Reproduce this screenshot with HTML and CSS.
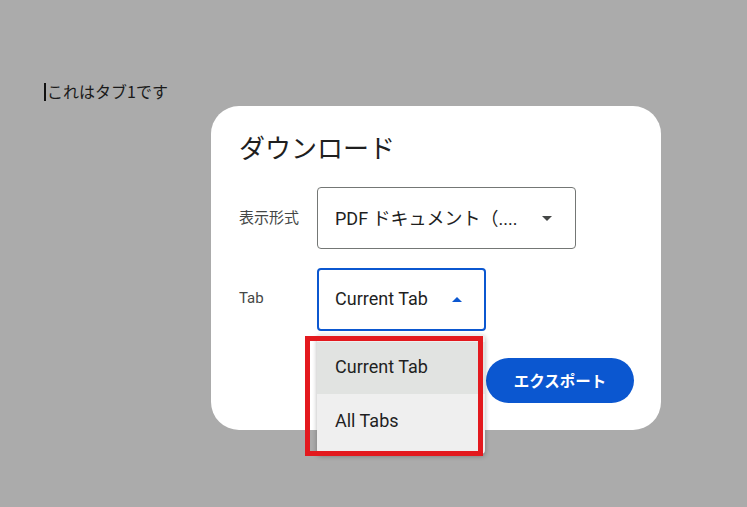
FILE: index.html
```html
<!DOCTYPE html>
<html lang="ja">
<head>
    <meta charset="UTF-8">
    <meta name="viewport" content="width=device-width, initial-scale=1.0">
    <title>ダウンロード</title>
    <link rel="stylesheet" href="styles.css">
</head>
<body>
    <div class="page">
        <p class="tab-text"><span class="caret"></span>これはタブ1です</p>
    </div>

    <div class="dialog">
        <h2 class="dialog-title">ダウンロード</h2>

        <div class="field-row">
            <span class="field-label">表示形式</span>
            <div class="select select-format">
                <span class="select-value">PDF ドキュメント（....</span>
                <span class="arrow-down"></span>
            </div>
        </div>

        <div class="field-row field-row-tab">
            <span class="field-label">Tab</span>
            <div class="select-wrap">
                <div class="select select-tab">
                    <span class="select-value">Current Tab</span>
                    <span class="arrow-up"></span>
                </div>
                <ul class="menu">
                    <li class="menu-item selected">Current Tab</li>
                    <li class="menu-item">All Tabs</li>
                </ul>
                <div class="highlight"></div>
            </div>
        </div>

        <div class="actions">
            <button class="btn-export">エクスポート</button>
        </div>
    </div>
</body>
</html>
```

FILE: styles.css
```css
html, body {
    margin: 0;
    height: 100%;
}

body {
    background: #ababab;
    font-family: "Roboto", "Noto Sans CJK JP", sans-serif;
    color: #1f1f1f;
}

.page {
    padding: 80px 0 0 44px;
}

.tab-text {
    margin: 0;
    display: flex;
    align-items: center;
    font-family: "Noto Sans CJK JP", sans-serif;
    font-size: 16px;
    line-height: 22px;
    color: #1a1a1a;
}

.caret {
    display: inline-block;
    width: 2px;
    height: 18px;
    background: #111;
    margin: 2px 1px 0 0;
}

/* modal window */
.dialog {
    position: absolute;
    left: 211px;
    top: 106px;
    width: 450px;
    box-sizing: border-box;
    padding: 24px 27px 27px 28px;
    background: #fff;
    border-radius: 28px;
}

.dialog-title {
    margin: 0 0 23px;
    font-family: "Noto Sans CJK JP", sans-serif;
    font-size: 26px;
    font-weight: 400;
    line-height: 34px;
    color: #1f1f1f;
}

.field-row {
    display: grid;
    grid-template-columns: 78px auto;
    align-items: center;
}

.field-row-tab {
    margin-top: 19px;
}

.field-label {
    font-size: 15px;
    color: #444746;
    padding-bottom: 3px;
    font-family: "Roboto", "Noto Sans CJK JP", sans-serif;
}

.select {
    display: flex;
    align-items: center;
    justify-content: space-between;
    box-sizing: border-box;
    border-radius: 4px;
    font-size: 18px;
    color: #1f1f1f;
    white-space: nowrap;
}

.select-value {
    padding-bottom: 3px;
}

.select-format {
    width: 259px;
    height: 62px;
    border: 1px solid #747775;
    padding: 0 23px 0 17px;
}

.select-tab {
    width: 169px;
    height: 63px;
    border: 2px solid #0b57d0;
    padding: 0 22px 0 16px;
}

.arrow-down {
    width: 0;
    height: 0;
    border-left: 5px solid transparent;
    border-right: 5px solid transparent;
    border-top: 5px solid #444746;
}

.arrow-up {
    width: 0;
    height: 0;
    margin-bottom: 1px;
    border-left: 5px solid transparent;
    border-right: 5px solid transparent;
    border-bottom: 5px solid #0b57d0;
}

.select-wrap {
    position: relative;
}

.menu {
    position: absolute;
    left: 0;
    top: 66px;
    width: 168px;
    margin: 0;
    padding: 8px 0;
    list-style: none;
    background: #efefef;
    border-radius: 4px;
    box-shadow: 0 2px 5px rgba(0, 0, 0, 0.3);
    z-index: 2;
}

.menu-item {
    height: 52px;
    box-sizing: border-box;
    display: flex;
    align-items: center;
    padding: 0 0 0 18px;
    font-size: 18px;
    color: #1f1f1f;
}

.menu-item.selected {
    background: #e1e3e1;
    padding-bottom: 3px;
}

/* red annotation box */
.highlight {
    position: absolute;
    left: -12px;
    top: 68px;
    width: 178px;
    height: 120px;
    box-sizing: border-box;
    border: 5px solid #e3191e;
    z-index: 3;
}

.actions {
    display: flex;
    justify-content: flex-end;
    margin-top: 27px;
}

.btn-export {
    width: 148px;
    height: 45px;
    border: none;
    border-radius: 23px;
    background: #0b57d0;
    color: #fff;
    font-family: "Noto Sans CJK JP", sans-serif;
    font-size: 15.5px;
    font-weight: 700;
    padding: 0 0 2px;
}
```
